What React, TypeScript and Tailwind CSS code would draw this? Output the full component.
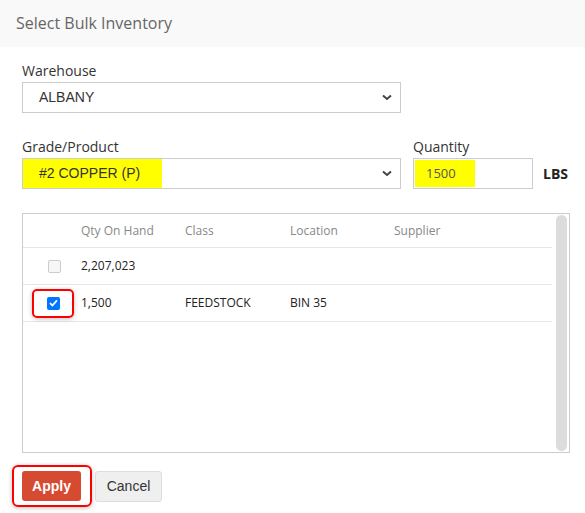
import React from 'react'

const sans = { fontFamily: '"Open Sans", "Liberation Sans", sans-serif' }
const arial = { fontFamily: '"Liberation Sans", Arial, sans-serif' }

function Chevron() {
  return (
    <svg width="10" height="7" viewBox="0 0 10 7" className="shrink-0">
      <path d="M1 1.5 L5 5 L9 1.5" fill="none" stroke="#444" strokeWidth="2" />
    </svg>
  )
}

function FakeSelect({ value, highlight }: { value: string; highlight?: string }) {
  return (
    <div className="relative flex h-[31px] w-[379px] items-center border border-[#ccc] bg-white pr-[8px]">
      {highlight ? <div className={`absolute top-0 bottom-0 left-0 bg-[#ffff00] ${highlight}`} /> : null}
      <span className="relative flex-1 pl-[16px] text-[14px] text-[#333]" style={arial}>
        {value}
      </span>
      <Chevron />
    </div>
  )
}

function Check({ checked }: { checked?: boolean }) {
  if (checked)
    return (
      <div className="flex h-[13px] w-[13px] items-center justify-center rounded-[2px] bg-[#0075ff]">
        <svg width="9" height="8" viewBox="0 0 9 8">
          <path d="M1 4.2 L3.4 6.5 L8 1.3" fill="none" stroke="#fff" strokeWidth="1.8" />
        </svg>
      </div>
    )
  return <div className="h-[13px] w-[13px] rounded-[2px] border border-[#ccc] bg-[#f6f6f6]" />
}

const rows = [
  { qty: '2,207,023', cls: '', loc: '', sup: '', checked: false },
  { qty: '1,500', cls: 'FEEDSTOCK', loc: 'BIN 35', sup: '', checked: true },
]

export default function App() {
  return (
    <div className="h-[513px] w-[585px] bg-white" style={sans}>
      <div className="flex h-[47px] items-center bg-[#f9f9f9] px-[16px]">
        <h1 className="mt-[-2px] text-[16px] text-[#666]">Select Bulk Inventory</h1>
      </div>

      <div className="px-[22px] pt-[14px]">
        <div className="text-[14px] leading-[20px] text-[#333]">Warehouse</div>
        <div className="mt-[1px]">
          <FakeSelect value="ALBANY" />
        </div>

        <div className="mt-[24px] flex items-end">
          <div>
            <div className="text-[14px] leading-[20px] text-[#333]">Grade/Product</div>
            <div className="mt-[1px]">
              <FakeSelect value="#2 COPPER (P)" highlight="w-[139px]" />
            </div>
          </div>
          <div className="ml-[12px]">
            <div className="text-[14px] leading-[20px] text-[#333]">Quantity</div>
            <div className="relative mt-[1px] flex h-[31px] w-[120px] items-center border border-[#ccc] bg-white">
              <div className="absolute top-[1px] bottom-[1px] left-[1px] w-[60px] bg-[#ffff00]" />
              <span className="relative pl-[12px] text-[13px] text-[#555]">1500</span>
            </div>
          </div>
          <div className="ml-[10px] flex h-[31px] items-center text-[14px] font-bold text-[#222]">LBS</div>
        </div>

        <div className="mt-[24px] flex h-[240px] w-[548px] border border-[#ccc]">
          <div className="flex-1">
            <div className="flex h-[34px] items-center border-b border-[#e6e6e6] text-[12px] text-[#888]">
              <div className="w-[58px]" />
              <div className="w-[104px]">Qty On Hand</div>
              <div className="w-[105px]">Class</div>
              <div className="w-[104px]">Location</div>
              <div>Supplier</div>
            </div>
            {rows.map((r) => (
              <div
                key={r.qty}
                className="flex h-[37px] items-center border-b border-[#e6e6e6] text-[12px] text-[#222]"
              >
                <div className="flex w-[58px] justify-center pl-[4px]">
                  {r.checked ? (
                    <div className="ml-[-2px] flex h-[29px] w-[42px] items-center justify-center rounded-[5px] border-2 border-[#ff0000] shadow-[0_1px_4px_rgba(0,0,0,0.25)]">
                      <Check checked />
                    </div>
                  ) : (
                    <Check />
                  )}
                </div>
                <div className="w-[104px]">{r.qty}</div>
                <div className="w-[105px]">{r.cls}</div>
                <div className="w-[104px]">{r.loc}</div>
                <div>{r.sup}</div>
              </div>
            ))}
          </div>
          <div className="w-[17px] pt-[1px] pr-[2px] pb-[1px] pl-[4px]">
            <div className="h-full w-[11px] rounded-[6px] bg-[#dcdcdc]" />
          </div>
        </div>

        <div className="mt-[12px] ml-[-10px] flex items-center" style={arial}>
          <div className="rounded-[6px] border-2 border-[#ff0000] py-[4px] pr-[9px] pl-[8px] shadow-[0_1px_4px_rgba(0,0,0,0.25)]">
            <button className="block h-[30px] w-[59px] rounded-[3px] bg-[#d64a32] text-[14px] font-bold text-white">
              Apply
            </button>
          </div>
          <button className="ml-[3px] h-[31px] w-[67px] rounded-[3px] border border-[#ddd] bg-[#efefef] text-[14px] text-[#333]">
            Cancel
          </button>
        </div>
      </div>
    </div>
  )
}
